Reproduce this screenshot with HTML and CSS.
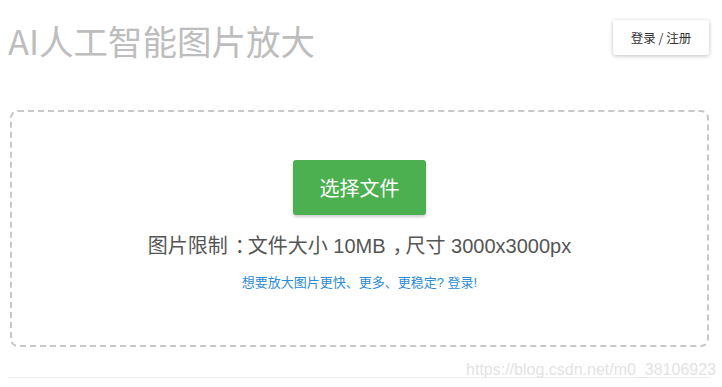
FILE: index.html
```html
<!DOCTYPE html>
<html lang="zh">
<head>
<meta charset="utf-8">
<link rel="stylesheet" href="styles.css">
</head>
<body>
<div class="page">
  <header class="header">
    <h1 class="title">AI人工智能图片放大</h1>
    <button class="login-btn">登录 / 注册</button>
  </header>
  <section class="dropzone">
    <button class="choose-btn">选择文件</button>
    <p class="limit">图片限制<span class="punct">：</span>文件大小 10MB<span class="punct">，</span>尺寸 3000x3000px</p>
    <a class="upsell" href="#">想要放大图片更快、更多、更稳定? 登录!</a>
  </section>
  <footer class="footer">
    <span class="watermark">https://blog.csdn.net/m0_38106923</span>
  </footer>
</div>
</body>
</html>
```
FILE: styles.css
```css
html, body {
  margin: 0;
  padding: 0;
  background: #fff;
  font-family: "Liberation Sans", "Noto Sans CJK SC", sans-serif;
}
.page {
  width: 702px;
  padding: 0 8px 0 8px;
}
.header {
  display: flex;
  justify-content: space-between;
  align-items: flex-start;
  height: 110px;
}
.title {
  margin: 15px 0 0 0;
  font-family: "Noto Sans CJK SC", "Noto Sans", sans-serif;
  font-size: 34.5px;
  font-weight: normal;
  line-height: 50px;
  color: #bdbdbd;
}
.login-btn {
  margin-top: 20px;
  margin-right: 1px;
  width: 96px;
  height: 35px;
  border: none;
  border-radius: 3px;
  background: #fff;
  color: #333;
  font-family: "Noto Sans CJK SC", sans-serif;
  font-size: 12.5px;
  box-shadow: 0 1px 4px rgba(0,0,0,0.25);
}
.dropzone {
  margin-left: 2px;
  margin-right: 1px;
  height: 233px;
  border: 2px dashed #c8c8c8;
  border-radius: 8px;
  display: flex;
  flex-direction: column;
  align-items: center;
}
.choose-btn {
  margin-top: 48px;
  width: 133px;
  height: 55px;
  border: none;
  border-radius: 3px;
  background: #4caf50;
  color: #fff;
  font-family: "Noto Sans CJK SC", sans-serif;
  font-size: 20px;
  box-shadow: 0 2px 3px rgba(0,0,0,0.2);
}
.limit {
  margin: 18px 0 0 0;
  font-family: "Liberation Sans", "Noto Sans CJK SC", sans-serif;
  font-size: 20px;
  line-height: 26px;
  color: #555;
}
.punct {
  padding-left: 0.35em;
  letter-spacing: -0.35em;
}
.upsell {
  margin-top: 15px;
  font-family: "Liberation Sans", "Noto Sans CJK SC", sans-serif;
  font-size: 13px;
  line-height: 18px;
  color: #2d8cd6;
  text-decoration: none;
}
.footer {
  margin-top: 16px;
  height: 14px;
  border-bottom: 1px solid #ececec;
  display: flex;
  justify-content: flex-end;
  align-items: flex-end;
}
.watermark {
  font-family: "Liberation Sans", sans-serif;
  font-size: 16px;
  line-height: 15px;
  color: #e3e3e3;
  margin-right: -6px;
}
```
